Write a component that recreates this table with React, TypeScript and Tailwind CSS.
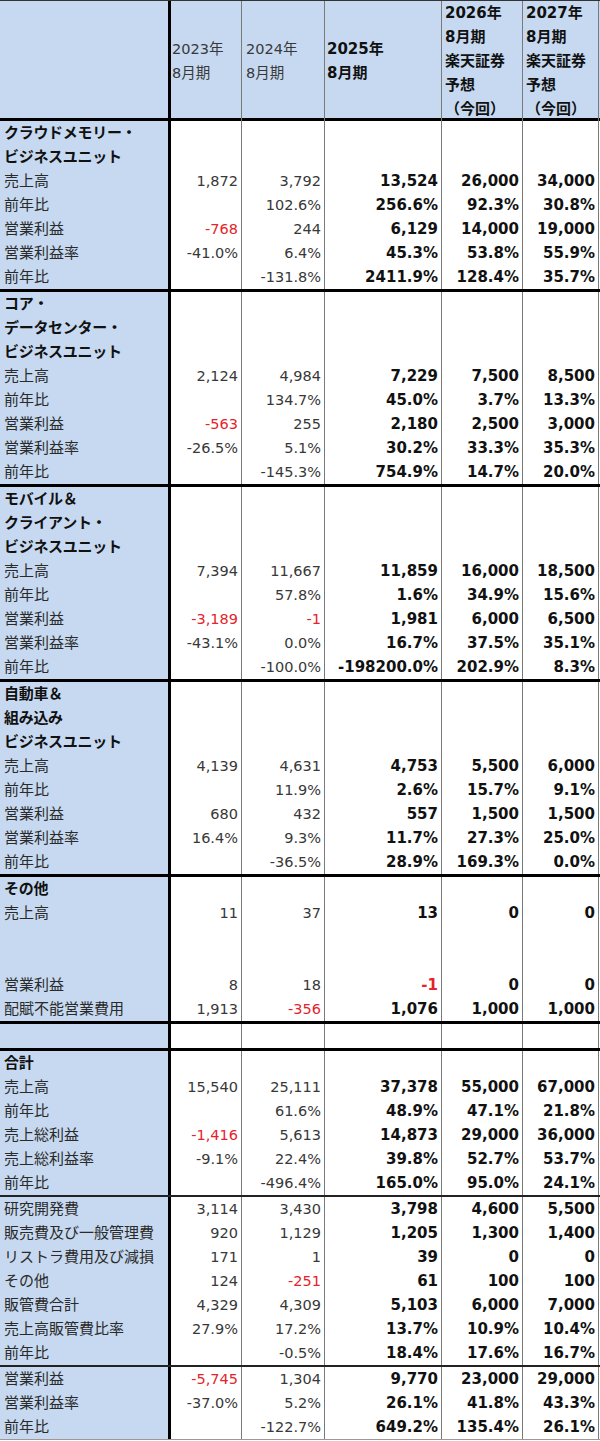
import React from 'react';

type Row = { label: string; vals: string[] } | { label: string; title: true } | { blank: true };

const COLS = 'grid grid-cols-[171px_71px_83px_117px_81px_76px]';
const FONT = { fontFamily: '"DejaVu Sans", "Noto Sans CJK JP", sans-serif' };

const title = (label: string): Row => ({ label, title: true });
const r = (label: string, ...vals: string[]): Row => ({ label, vals });
const blank: Row = { blank: true };

const sections: { rows: Row[]; border: string }[] = [
  {
    border: 'border-b-[3px] border-black',
    rows: [
      title('クラウドメモリー・'),
      title('ビジネスユニット'),
      r('売上高', '1,872', '3,792', '13,524', '26,000', '34,000'),
      r('前年比', '', '102.6%', '256.6%', '92.3%', '30.8%'),
      r('営業利益', '-768', '244', '6,129', '14,000', '19,000'),
      r('営業利益率', '-41.0%', '6.4%', '45.3%', '53.8%', '55.9%'),
      r('前年比', '', '-131.8%', '2411.9%', '128.4%', '35.7%'),
    ],
  },
  {
    border: 'border-b-[3px] border-black',
    rows: [
      title('コア・'),
      title('データセンター・'),
      title('ビジネスユニット'),
      r('売上高', '2,124', '4,984', '7,229', '7,500', '8,500'),
      r('前年比', '', '134.7%', '45.0%', '3.7%', '13.3%'),
      r('営業利益', '-563', '255', '2,180', '2,500', '3,000'),
      r('営業利益率', '-26.5%', '5.1%', '30.2%', '33.3%', '35.3%'),
      r('前年比', '', '-145.3%', '754.9%', '14.7%', '20.0%'),
    ],
  },
  {
    border: 'border-b-[3px] border-black',
    rows: [
      title('モバイル＆'),
      title('クライアント・'),
      title('ビジネスユニット'),
      r('売上高', '7,394', '11,667', '11,859', '16,000', '18,500'),
      r('前年比', '', '57.8%', '1.6%', '34.9%', '15.6%'),
      r('営業利益', '-3,189', '-1', '1,981', '6,000', '6,500'),
      r('営業利益率', '-43.1%', '0.0%', '16.7%', '37.5%', '35.1%'),
      r('前年比', '', '-100.0%', '-198200.0%', '202.9%', '8.3%'),
    ],
  },
  {
    border: 'border-b-[3px] border-black',
    rows: [
      title('自動車＆'),
      title('組み込み'),
      title('ビジネスユニット'),
      r('売上高', '4,139', '4,631', '4,753', '5,500', '6,000'),
      r('前年比', '', '11.9%', '2.6%', '15.7%', '9.1%'),
      r('営業利益', '680', '432', '557', '1,500', '1,500'),
      r('営業利益率', '16.4%', '9.3%', '11.7%', '27.3%', '25.0%'),
      r('前年比', '', '-36.5%', '28.9%', '169.3%', '0.0%'),
    ],
  },
  {
    border: 'border-b-[3px] border-black',
    rows: [
      title('その他'),
      r('売上高', '11', '37', '13', '0', '0'),
      blank,
      blank,
      r('営業利益', '8', '18', '-1', '0', '0'),
      r('配賦不能営業費用', '1,913', '-356', '1,076', '1,000', '1,000'),
    ],
  },
  { border: 'border-b-[3px] border-black', rows: [blank] },
  {
    border: 'border-b-2 border-[#222]',
    rows: [
      title('合計'),
      r('売上高', '15,540', '25,111', '37,378', '55,000', '67,000'),
      r('前年比', '', '61.6%', '48.9%', '47.1%', '21.8%'),
      r('売上総利益', '-1,416', '5,613', '14,873', '29,000', '36,000'),
      r('売上総利益率', '-9.1%', '22.4%', '39.8%', '52.7%', '53.7%'),
      r('前年比', '', '-496.4%', '165.0%', '95.0%', '24.1%'),
    ],
  },
  {
    border: 'border-b-2 border-[#222]',
    rows: [
      r('研究開発費', '3,114', '3,430', '3,798', '4,600', '5,500'),
      r('販売費及び一般管理費', '920', '1,129', '1,205', '1,300', '1,400'),
      r('リストラ費用及び減損', '171', '1', '39', '0', '0'),
      r('その他', '124', '-251', '61', '100', '100'),
      r('販管費合計', '4,329', '4,309', '5,103', '6,000', '7,000'),
      r('売上高販管費比率', '27.9%', '17.2%', '13.7%', '10.9%', '10.4%'),
      r('前年比', '', '-0.5%', '18.4%', '17.6%', '16.7%'),
    ],
  },
  {
    border: 'border-b border-[#999]',
    rows: [
      r('営業利益', '-5,745', '1,304', '9,770', '23,000', '29,000'),
      r('営業利益率', '-37.0%', '5.2%', '26.1%', '41.8%', '43.3%'),
      r('前年比', '', '-122.7%', '649.2%', '135.4%', '26.1%'),
    ],
  },
];

function Cell({ v, i }: { v: string; i: number }) {
  const red = v.startsWith('-') && !v.endsWith('%');
  const bold = i >= 2;
  return (
    <div
      className={`h-6 border-r border-[#7a7a7a] bg-white pr-[3px] text-right leading-6 whitespace-nowrap ${
        bold ? 'text-[15px] font-bold' : 'text-[14.5px]'
      } ${red ? 'text-[#e5232b]' : bold ? 'text-[#111]' : 'text-[#383838]'}`}
    >
      {v}
    </div>
  );
}

function TableRow({ row }: { row: Row }) {
  const label = 'blank' in row ? '' : row.label;
  const isTitle = 'title' in row;
  const vals = 'vals' in row ? row.vals : ['', '', '', '', ''];
  return (
    <div className={COLS}>
      <div
        className={`h-6 border-r-[3px] border-black bg-[#c6d9f0] pl-1 text-[15px] leading-6 whitespace-nowrap ${
          isTitle ? 'font-bold tracking-[-0.3px] text-[#111]' : 'text-[#2a2a2a]'
        }`}
      >
        {label}
      </div>
      {vals.map((v, i) => (
        <Cell key={i} v={v} i={i} />
      ))}
    </div>
  );
}

function Header() {
  const cols = [
    { lines: ['2023年', '8月期'], bold: false, pad: 'pl-[1px]' },
    { lines: ['2024年', '8月期'], bold: false, pad: 'pl-1' },
    { lines: ['2025年', '8月期'], bold: true, pad: 'pl-[2px]' },
    { lines: ['2026年', '8月期', '楽天証券', '予想', '（今回）'], bold: true, pad: 'pl-[3px]' },
    { lines: ['2027年', '8月期', '楽天証券', '予想', '（今回）'], bold: true, pad: 'pl-[3px]' },
  ];
  return (
    <div className={`${COLS} h-[121px] border-t border-b-[3px] border-t-[#333] border-b-black bg-[#c6d9f0]`}>
      <div className="border-r-[3px] border-black" />
      {cols.map((c, i) => (
        <div
          key={i}
          className={`flex flex-col justify-center border-r border-[#7a7a7a] leading-6 whitespace-nowrap ${c.pad} ${
            c.bold ? 'text-[15px] font-bold text-[#111]' : 'text-[14.5px] text-[#383838]'
          }`}
        >
          {c.lines.map((l) => (
            <div key={l}>{l}</div>
          ))}
        </div>
      ))}
    </div>
  );
}

export default function App() {
  return (
    <div className="w-[600px] bg-white" style={FONT}>
      <Header />
      {sections.map((s, si) => (
        <div key={si} className={s.border}>
          {s.rows.map((row, ri) => (
            <TableRow key={ri} row={row} />
          ))}
        </div>
      ))}
    </div>
  );
}
